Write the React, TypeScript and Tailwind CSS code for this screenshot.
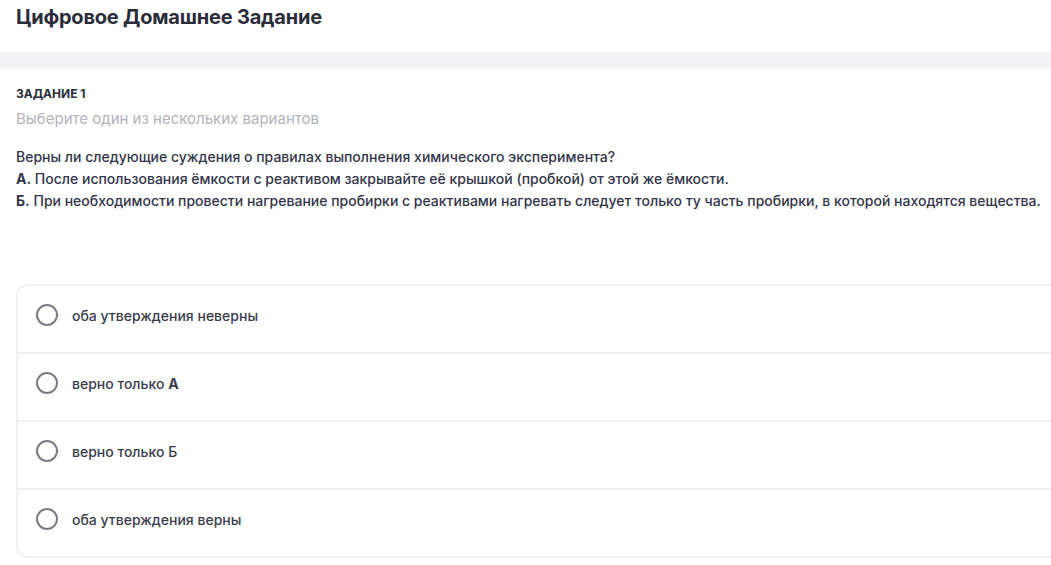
import React from 'react';

const options = [
  { id: 1, label: <>оба утверждения неверны</> },
  { id: 2, label: <>верно только <b className="font-bold">А</b></> },
  { id: 3, label: <>верно только Б</> },
  { id: 4, label: <>оба утверждения верны</> },
];

export default function App() {
  return (
    <div className="min-h-screen overflow-hidden bg-white text-[#2b2d3b]" style={{ fontFamily: 'Inter, "Noto Sans", sans-serif' }}>
      {/* Шапка */}
      <header className="px-4 pt-[5px] h-[52px]">
        <h1 className="text-[20px] leading-[24px] font-bold tracking-[-0.2px] text-[#2a2c3a]">Цифровое Домашнее Задание</h1>
      </header>
      <div className="h-[17px] bg-[#f4f4f8]" />

      {/* Задание */}
      <section className="px-4 pt-[18px]">
        <div className="text-[12px] leading-[14px] font-bold uppercase">Задание 1</div>
        <div className="mt-[9px] text-[15px] leading-[18px] text-[#b3b3bb]">Выберите один из нескольких вариантов</div>

        <div className="mt-[18px] text-[14px] leading-[22px] font-medium text-[#33354a] whitespace-nowrap">
          <p>Верны ли следующие суждения о правилах выполнения химического эксперимента?</p>
          <p><b className="font-bold">А.</b> После использования ёмкости с реактивом закрывайте её крышкой (пробкой) от этой же ёмкости.</p>
          <p><b className="font-bold">Б.</b> При необходимости провести нагревание пробирки с реактивами нагревать следует только ту часть пробирки, в которой находятся вещества.</p>
        </div>

        {/* Варианты ответа */}
        <div className="mt-[72px] -mr-8 rounded-[12px] border-2 border-[#f1f1f5]">
          {options.map((o, i) => (
            <label
              key={o.id}
              className={`flex items-center h-[66px] pb-[8px] pl-[18px] gap-[14px] cursor-pointer ${i > 0 ? 'border-t-2 border-[#f1f1f5] h-[68px]' : ''}`}
            >
              <span className="w-[22px] h-[22px] rounded-full border-2 border-[#7b7b86] shrink-0" />
              <span className="text-[14px] font-medium text-[#3a3c4c]">{o.label}</span>
            </label>
          ))}
        </div>
      </section>
    </div>
  );
}
